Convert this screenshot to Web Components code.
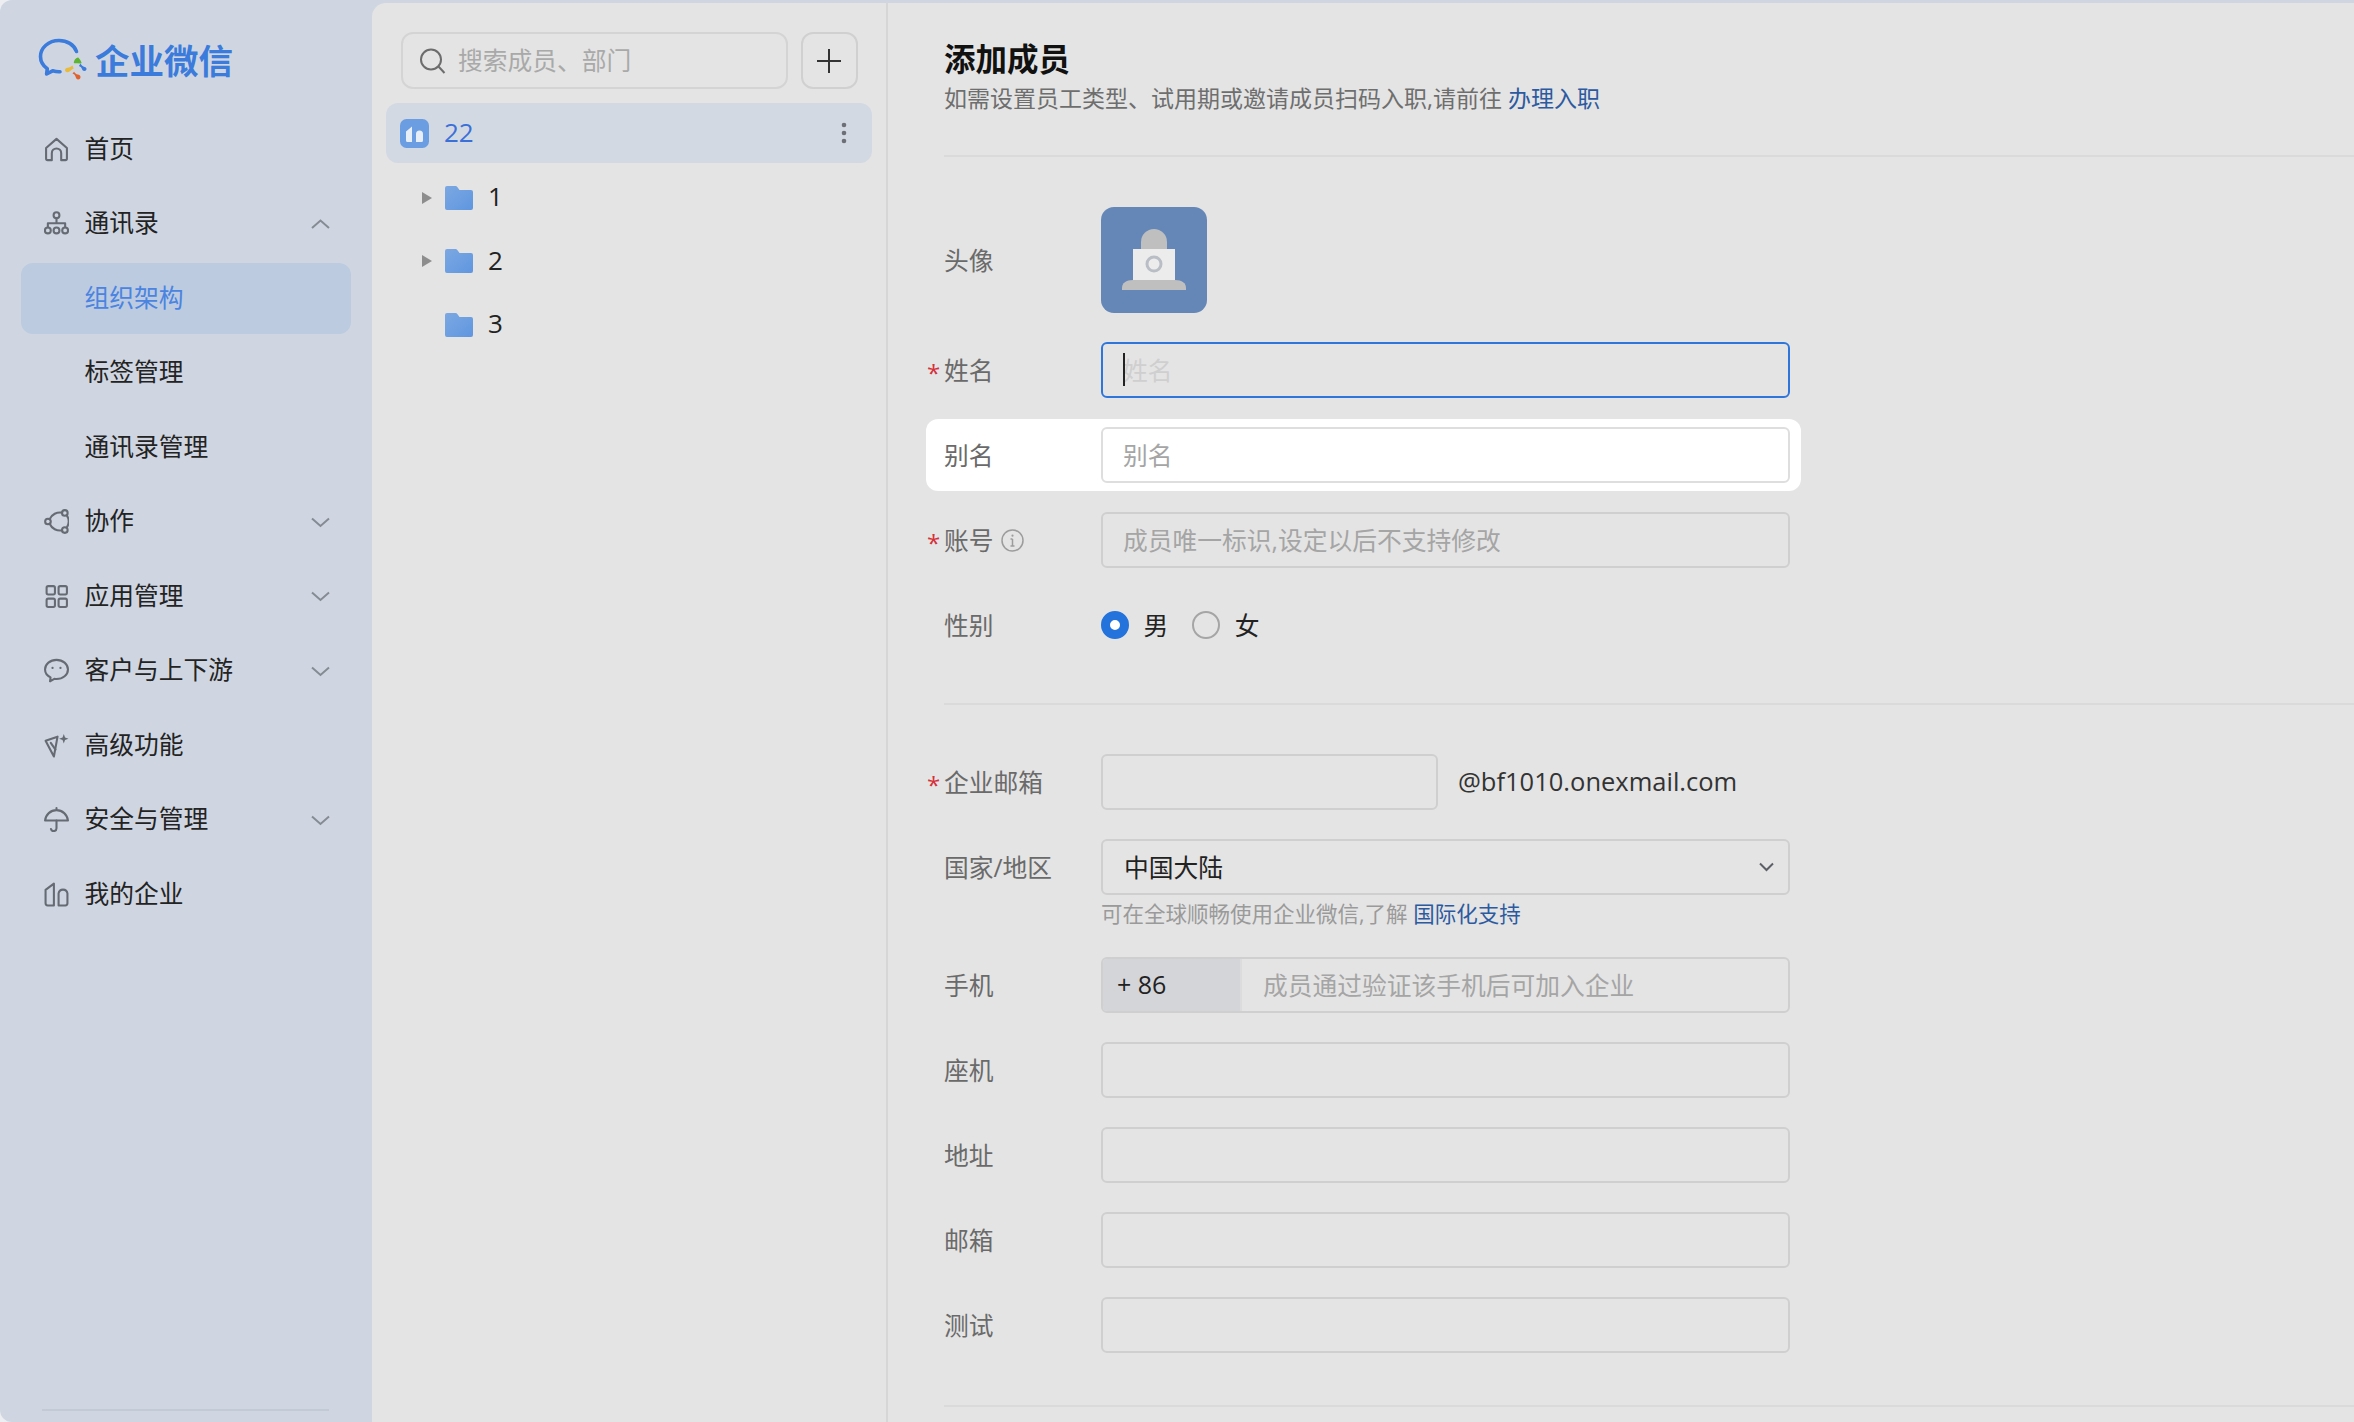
<!DOCTYPE html>
<html lang="zh-CN">
<head>
<meta charset="utf-8">
<title>添加成员</title>
<style>
  html, body { margin: 0; height: 100%; overflow: hidden; background: #eceef2; }
  body { font-family: "Open Sans", "Noto Sans CJK SC", sans-serif; }
</style>
</head>
<body>
<wx-app>
  <wx-sidebar slot="sidebar">
    <wx-nav icon="home">首页</wx-nav>
    <wx-nav icon="org" chevron="up">通讯录</wx-nav>
    <wx-nav active>组织架构</wx-nav>
    <wx-nav>标签管理</wx-nav>
    <wx-nav>通讯录管理</wx-nav>
    <wx-nav icon="collab" chevron="down">协作</wx-nav>
    <wx-nav icon="apps" chevron="down">应用管理</wx-nav>
    <wx-nav icon="chat" chevron="down">客户与上下游</wx-nav>
    <wx-nav icon="wand">高级功能</wx-nav>
    <wx-nav icon="umbrella" chevron="down">安全与管理</wx-nav>
    <wx-nav icon="corp">我的企业</wx-nav>
  </wx-sidebar>

  <wx-tree slot="tree">
    <wx-tree-row arrow>1</wx-tree-row>
    <wx-tree-row arrow>2</wx-tree-row>
    <wx-tree-row>3</wx-tree-row>
  </wx-tree>

  <wx-member-form slot="form"></wx-member-form>
</wx-app>

<script>
const ICONS = {
  home: '<path d="M2 10.500 12 1.800l10 8.700v10.200a1.500 1.500 0 0 1-1.500 1.500H16.500v-6.700a4.500 4.500 0 0 0-9 0v6.700H3.500A1.500 1.500 0 0 1 2 20.700z"/>',
  org: '<circle cx="12" cy="4" r="2.800"/><path d="M12 6.800v5M3.700 15.500v-3.700h16.600v3.700"/><circle cx="3.700" cy="18.700" r="2.800"/><circle cx="12" cy="18.700" r="2.800"/><circle cx="20.300" cy="18.700" r="2.800"/>',
  collab: '<circle cx="20" cy="3.800" r="2.700"/><circle cx="3.800" cy="12" r="2.700"/><circle cx="20" cy="20.200" r="2.700"/><path d="M17.400 3.500A11 11 0 0 0 5.400 9.800M5.400 14.200a11 11 0 0 0 12 6.300M21.800 6a11 11 0 0 1 0 12"/>',
  apps: '<rect x="2.500" y="2" width="8" height="8" rx="1.500"/><rect x="14" y="2" width="8" height="8" rx="1.500"/><rect x="2.500" y="14" width="8" height="8" rx="1.500"/><rect x="14" y="14" width="8" height="8" rx="1.500"/>',
  chat: '<path d="M12 1.800C5.900 1.800 1 5.800 1 11c0 3.300 2.100 6 5.300 7.600l-.5 3.800 4.100-2.400c.7.100 1.400.200 2.100.200 6.100 0 11-4 11-9.200S18.100 1.800 12 1.800z"/><circle cx="8.200" cy="9.500" r="1.100" fill="currentColor" stroke="none"/><circle cx="15.800" cy="9.500" r="1.100" fill="currentColor" stroke="none"/>',
  wand: '<path d="M1.500 7.500 13 3.500l-3.500 19z"/><path d="M6.500 9.500l4.500 6.500"/><path d="M19 1l1.200 3.300L23.500 5.500l-3.300 1.200L19 10l-1.200-3.300L14.500 5.500l3.300-1.200z" fill="currentColor" stroke="none"/>',
  umbrella: '<path d="M12 1v2M1 13C1.600 7.300 6.300 3 12 3s10.400 4.300 11 10z"/><path d="M12 13v7.500a2.700 2.700 0 0 1-5.300 .7"/>',
  corp: '<path d="M1.500 7.500 9.500 1.500V22.500H3.500a2 2 0 0 1-2-2zM14 11a4.300 4.300 0 0 1 8.500 0v9.500a2 2 0 0 1-2 2H14z"/>'
}

class WxApp extends HTMLElement {
  constructor () {
    super()
    this.shadow = this.attachShadow({ mode: 'open' })
  }
  connectedCallback () {
    this.shadow.innerHTML = /*html*/`
      <style>
        :host { display: grid; grid-template-columns: 372px 1fr; height: 100vh; }
        .wrap { display: flex; flex-direction: column; background: #cfd6e1; padding-top: 3px; min-width: 0; box-sizing: border-box; }
        .main {
          display: grid;
          grid-template-columns: 516px 1fr;
          flex: 1;
          background: #e4e4e4;
          border-top-left-radius: 14px;
          min-width: 0;
          overflow: hidden;
        }
      </style>
      <slot name="sidebar"></slot>
      <div class="wrap">
        <div class="main">
          <slot name="tree"></slot>
          <slot name="form"></slot>
        </div>
      </div>
    `
  }
}

class WxSidebar extends HTMLElement {
  constructor () {
    super()
    this.shadow = this.attachShadow({ mode: 'open' })
  }
  connectedCallback () {
    this.shadow.innerHTML = /*html*/`
      <style>
        :host {
          display: flex;
          flex-direction: column;
          background: #cfd6e1;
          border-radius: 12px 0 0 12px;
          height: 100%;
          box-sizing: border-box;
        }
        .logo { display: flex; align-items: center; height: 112px; padding: 8px 0 0 38px; gap: 7px; box-sizing: border-box; }
        .logo span { font-size: 34.500px; font-weight: 700; color: #3a7bdc; font-family: "Noto Sans CJK SC", sans-serif; padding-bottom: 3px; }
        nav { flex: 1; }
        .foot { height: 2px; background: #c2cad6; margin: 0 43px 11px 42px; }
      </style>
      <div class="logo">
        <svg width="50" height="44" viewBox="0 0 50 44" fill="none">
          <path d="M38.500 13.500C36 6.500 29 2.500 21 2.500 10.500 2.500 2.500 9.800 2.500 18.500c0 5 2.600 9.300 6.800 12.200l-.7 5.300 6-3.200c2.400.7 5 1 7.400 .9" stroke="#3a7bdc" stroke-width="3.600" stroke-linecap="round" stroke-linejoin="round"/>
          <path d="M36.500 24.500c.4-2.400 1.600-3.700 3.500-4.300 1.200 1.300 2.200 2.600 2.800 4.500-2.200-.4-4.200-.4-6.300-.2z" fill="#5cb531" stroke="#5cb531" stroke-width="1.500" stroke-linejoin="round"/>
          <path d="M42.500 25.500c1 1.700 2.300 3 4.300 3.600 1 .3 1.700 1 1.700 1.800 0 1-.9 2-2.300 2-1 0-1.800-.8-2.100-1.700-.6-1.900-2-2.800-3.200-3.300z" fill="#3a7bdc"/>
          <path d="M34.500 27.500c-1.400 1-3 2.300-5 2.300-1.400 0-2.500 1-2.500 2.200 0 1.500 1.300 2.500 2.800 2.200 1.900-.4 3.300-2.300 5.900-3.700z" fill="#e9bb3c"/>
          <path d="M34.500 35.500c1.400.6 2.500 1.400 3 3 .4 1.500 1 3 2.700 3 1.500 0 2.300-1.100 2.300-2.400 0-1.400-1.100-2.500-2.800-2.600-1.500-.1-2.800-1.400-3.600-2.700z" fill="#e2622d"/>
        </svg>
        <span>企业微信</span>
      </div>
      <nav><slot></slot></nav>
      <div class="foot"></div>
    `
  }
}

class WxNav extends HTMLElement {
  constructor () {
    super()
    this.shadow = this.attachShadow({ mode: 'open' })
  }
  connectedCallback () {
    const icon = ICONS[this.getAttribute('icon')]
    const chevron = this.getAttribute('chevron')
    const points = chevron === 'up' ? '1,9 9.500,1.500 18,9' : '1,1.500 9.500,9 18,1.500'
    this.shadow.innerHTML = /*html*/`
      <style>
        :host { display: block; height: 74.500px; padding: 1.750px 21px; box-sizing: border-box; }
        .row {
          display: flex;
          align-items: center;
          height: 100%;
          border-radius: 12px;
          padding-left: 23px;
          font-size: 24.750px;
          color: #232323;
          position: relative;
        }
        :host([active]) .row { background: #bccbe0; color: #4a84e0; }
        .icon { width: 25px; height: 25px; margin-right: 15.500px; flex: none; color: #666b73; }
        .blank { width: 25px; margin-right: 15.500px; flex: none; }
        .label { padding-bottom: 5px; }
        .chev { position: absolute; right: 21px; top: 50%; margin-top: -5px; }
      </style>
      <div class="row">
        ${icon
          ? `<svg class="icon" viewBox="0 0 24 24" fill="none" stroke="currentColor" stroke-width="2" stroke-linejoin="round" stroke-linecap="round">${icon}</svg>`
          : '<span class="blank"></span>'}
        <span class="label"><slot></slot></span>
        ${chevron
          ? `<svg class="chev" width="19" height="11" viewBox="0 0 19 11" fill="none"><polyline points="${points}" stroke="#868b93" stroke-width="2"/></svg>`
          : ''}
      </div>
    `
  }
}

class WxTree extends HTMLElement {
  constructor () {
    super()
    this.shadow = this.attachShadow({ mode: 'open' })
  }
  connectedCallback () {
    this.shadow.innerHTML = /*html*/`
      <style>
        :host { display: block; border-right: 2px solid #d6d6d6; height: 100%; box-sizing: border-box; }
        .top { display: flex; gap: 13px; padding: 29px 0 0 29px; }
        .search {
          display: flex;
          align-items: center;
          width: 387px;
          height: 57px;
          box-sizing: border-box;
          border: 2px solid #d4d4d4;
          border-radius: 12px;
          padding-left: 16px;
          gap: 13px;
          font-size: 24.750px;
          color: #a9a9a9;
        }
        .search span { padding-bottom: 4px; margin-left: -1px; }
        .add {
          display: flex;
          align-items: center;
          justify-content: center;
          width: 57px;
          height: 57px;
          box-sizing: border-box;
          border: 2px solid #d0d0d0;
          border-radius: 12px;
          padding-right: 2px;
        }
        .root {
          display: flex;
          align-items: center;
          height: 60px;
          margin: 14px 14px 3px 14px;
          padding: 0 25px 0 14px;
          border-radius: 12px;
          background: #d2d9e3;
          color: #3a70d8;
          font-size: 26px;
          gap: 15px;
        }
        .root span { flex: 1; padding-bottom: 3px; }
      </style>
      <div class="top">
        <div class="search">
          <svg width="27" height="26" viewBox="0 0 27 26" fill="none" stroke="#6d6d6d" stroke-width="2"><circle cx="12" cy="11.500" r="10"/><path d="M19.500 18.500l6 6.500"/></svg>
          <span>搜索成员、部门</span>
        </div>
        <div class="add">
          <svg width="24" height="24" viewBox="0 0 24 24" stroke="#333" stroke-width="2"><path d="M12 0v24M0 12h24"/></svg>
        </div>
      </div>
      <div class="root">
        <svg width="29" height="29" viewBox="0 0 29 29"><rect width="29" height="29" rx="6.500" fill="#6a9de2"/><path d="M6 12.500 12 7.500V23H7.500A1.500 1.500 0 0 1 6 21.500zM16 15a3.200 3.200 0 0 1 7 0v6.500a1.500 1.500 0 0 1-1.500 1.500H16z" fill="#e8eef8"/></svg>
        <span>22</span>
        <svg width="6" height="22" viewBox="0 0 6 22" fill="#6c6f75"><circle cx="3" cy="3" r="2.300"/><circle cx="3" cy="11" r="2.300"/><circle cx="3" cy="19" r="2.300"/></svg>
      </div>
      <slot></slot>
    `
  }
}

class WxTreeRow extends HTMLElement {
  constructor () {
    super()
    this.shadow = this.attachShadow({ mode: 'open' })
  }
  connectedCallback () {
    this.shadow.innerHTML = /*html*/`
      <style>
        :host { display: flex; align-items: center; height: 63.500px; padding-left: 50px; font-size: 26px; color: #222; }
        .arrow { width: 23px; flex: none; display: flex; }
        .folder { margin-right: 15px; flex: none; }
        .label { padding-bottom: 3px; }
      </style>
      <span class="arrow">
        ${this.hasAttribute('arrow') ? '<svg width="10" height="12" viewBox="0 0 10 12"><path d="M0 0l10 6-10 6z" fill="#8d8d8d"/></svg>' : ''}
      </span>
      <svg class="folder" width="28" height="24" viewBox="0 0 28 24"><defs><linearGradient id="f" x1="0" y1="0" x2="1" y2="1"><stop offset="0" stop-color="#7ca8e2"/><stop offset="1" stop-color="#5f96e0"/></linearGradient></defs><path d="M2 0h8.500c.8 0 1.300.3 1.800 .9L14.500 4H26a2 2 0 0 1 2 2v16a2 2 0 0 1-2 2H2a2 2 0 0 1-2-2V2a2 2 0 0 1 2-2z" fill="url(#f)"/></svg>
      <span class="label"><slot></slot></span>
    `
  }
}

class WxRow extends HTMLElement {
  constructor () {
    super()
    this.shadow = this.attachShadow({ mode: 'open' })
  }
  connectedCallback () {
    const required = this.hasAttribute('required')
    const info = this.hasAttribute('info')
    this.shadow.innerHTML = /*html*/`
      <style>
        :host { display: flex; align-items: center; min-height: 56px; margin-bottom: 29px; position: relative; }
        :host([highlight]) {
          background: #fff;
          border-radius: 12px;
          margin: -8px 0 21px -18px;
          padding: 8px 11px 8px 18px;
          width: 846px;
          box-sizing: content-box;
        }
        label { display: flex; align-items: center; width: 157px; flex: none; font-size: 24.750px; color: #6a6a6a; white-space: nowrap; }
        label span { padding-bottom: 3px; }
        .req { position: absolute; left: -17px; top: 50%; margin-top: -11px; color: #d6303a; font-size: 24px; line-height: 28px; }
        .info { margin-left: 7px; }
        .body { display: flex; align-items: center; width: 689px; }
      </style>
      ${required ? '<span class="req">*</span>' : ''}
      <label>
        <span>${this.getAttribute('label')}</span>
        ${info ? '<svg class="info" width="23" height="23" viewBox="0 0 23 23" fill="none" stroke="#9c9c9c"><circle cx="11.500" cy="11.500" r="10.500" stroke-width="1.500"/><path d="M11.500 10v7M9.500 10h2M9.500 17h4" stroke-width="1.500"/><circle cx="11.500" cy="6.700" r="1.100" fill="#9c9c9c" stroke="none"/></svg>' : ''}
      </label>
      <div class="body"><slot></slot></div>
    `
  }
}

class WxField extends HTMLElement {
  constructor () {
    super()
    this.shadow = this.attachShadow({ mode: 'open' })
  }
  connectedCallback () {
    const prefix = this.getAttribute('prefix')
    const placeholder = this.getAttribute('placeholder') || ''
    const focus = this.hasAttribute('focus')
    this.shadow.innerHTML = /*html*/`
      <style>
        :host {
          display: flex;
          align-items: center;
          flex: 1;
          height: 56px;
          box-sizing: border-box;
          border: 2px solid #cfcfcf;
          border-radius: 6px;
          font-size: 24.750px;
          color: #a5a5a5;
          overflow: hidden;
        }
        :host([focus]) { border-color: #2f76dc; color: #cfcfcf; }
        :host([light]) { background: #fff; border-color: #dedede; }
        .prefix {
          width: 139px;
          flex: none;
          align-self: stretch;
          display: flex;
          align-items: center;
          padding: 0 0 3px 14px;
          box-sizing: border-box;
          background: #d3d5d9;
          border-right: 2px solid #dcdcdc;
          color: #222;
          font-size: 25px;
        }
        .text { padding: 0 0 3px ${prefix ? '21px' : '20px'}; position: relative; white-space: nowrap; }
        .caret { position: absolute; left: 20px; top: 2px; bottom: 4px; width: 2px; background: #222; }
      </style>
      ${prefix ? `<span class="prefix">${prefix}</span>` : ''}
      <span class="text">${focus ? '<i class="caret"></i>' : ''}${placeholder}</span>
    `
  }
}

class WxSelect extends HTMLElement {
  constructor () {
    super()
    this.shadow = this.attachShadow({ mode: 'open' })
  }
  connectedCallback () {
    this.shadow.innerHTML = /*html*/`
      <style>
        :host {
          display: flex;
          align-items: center;
          justify-content: space-between;
          flex: 1;
          height: 56px;
          box-sizing: border-box;
          border: 2px solid #cfcfcf;
          border-radius: 6px;
          padding: 0 14px 0 21px;
          font-size: 24.750px;
          color: #222;
        }
        span { padding-bottom: 3px; }
      </style>
      <span><slot></slot></span>
      <svg width="15" height="10" viewBox="0 0 15 10" fill="none"><path d="M1 1.500 7.500 8 14 1.500" stroke="#5c5f65" stroke-width="2"/></svg>
    `
  }
}

class WxRadio extends HTMLElement {
  constructor () {
    super()
    this.shadow = this.attachShadow({ mode: 'open' })
  }
  connectedCallback () {
    this.shadow.innerHTML = /*html*/`
      <style>
        :host { display: inline-flex; align-items: center; gap: 14.500px; font-size: 24.750px; color: #222; margin-right: 24px; }
        .dot { width: 28px; height: 28px; box-sizing: border-box; border-radius: 50%; border: 2px solid #a5a5a5; }
        :host([checked]) .dot { border: 9px solid #2472dc; background: #fff; }
        span.t { padding-bottom: 3px; }
      </style>
      <span class="dot"></span>
      <span class="t"><slot></slot></span>
    `
  }
}

class WxMemberForm extends HTMLElement {
  constructor () {
    super()
    this.shadow = this.attachShadow({ mode: 'open' })
  }
  connectedCallback () {
    this.shadow.innerHTML = /*html*/`
      <style>
        :host { display: block; padding-left: 56px; min-width: 0; }
        h2 { margin: 0; padding-top: 34px; font-size: 31.500px; line-height: 40px; font-weight: 700; color: #111; font-family: "Noto Sans CJK SC", sans-serif; }
        p { margin: 6px 0 0; font-size: 23px; line-height: 30px; color: #6e6e6e; white-space: nowrap; }
        a { color: #2c5aa0; text-decoration: none; }
        hr { border: 0; height: 2px; background: #dadada; margin: 0; }
        .head-line { margin-top: 42px; margin-bottom: 50px; }
        .mid-line { margin-top: 50px; margin-bottom: 49px; }
        .end-line { margin-top: 52px; }
        .avatar {
          display: flex;
          align-items: center;
          justify-content: center;
          width: 106px;
          height: 106px;
          border-radius: 13px;
          background: #6487b8;
        }
        .mail { flex: none; width: 337px; }
        .domain { margin-left: 20px; font-size: 25.500px; color: #333; white-space: nowrap; padding-bottom: 2px; }
        .hint { margin: -25px 0 0 157px; height: 29px; line-height: 29px; font-size: 21.500px; color: #9a9a9a; white-space: nowrap; padding-bottom: 29px; }
      </style>
      <h2>添加成员</h2>
      <p>如需设置员工类型、试用期或邀请成员扫码入职,请前往 <a>办理入职</a></p>
      <hr class="head-line">

      <wx-row label="头像">
        <div class="avatar">
          <svg width="64" height="64" viewBox="0 0 64 64">
            <path d="M19 22V14a13 13 0 0 1 26 0v8z" fill="#bfbfbf"/>
            <rect x="11" y="21" width="42" height="31" fill="#ececec"/>
            <circle cx="32" cy="36" r="7" fill="none" stroke="#b9bec6" stroke-width="3"/>
            <path d="M0 60c0-5 4-8 11-8h42c7 0 11 3 11 8v2H0z" fill="#bfbfbf"/>
          </svg>
        </div>
      </wx-row>
      <wx-row label="姓名" required><wx-field focus placeholder="姓名"></wx-field></wx-row>
      <wx-row label="别名" highlight><wx-field light placeholder="别名"></wx-field></wx-row>
      <wx-row label="账号" required info><wx-field placeholder="成员唯一标识,设定以后不支持修改"></wx-field></wx-row>
      <wx-row label="性别">
        <wx-radio checked>男</wx-radio>
        <wx-radio>女</wx-radio>
      </wx-row>
      <hr class="mid-line">

      <wx-row label="企业邮箱" required>
        <wx-field class="mail"></wx-field>
        <span class="domain">@bf1010.onexmail.com</span>
      </wx-row>
      <wx-row label="国家/地区"><wx-select>中国大陆</wx-select></wx-row>
      <div class="hint">可在全球顺畅使用企业微信,了解 <a>国际化支持</a></div>
      <wx-row label="手机"><wx-field prefix="+ 86" placeholder="成员通过验证该手机后可加入企业"></wx-field></wx-row>
      <wx-row label="座机"><wx-field></wx-field></wx-row>
      <wx-row label="地址"><wx-field></wx-field></wx-row>
      <wx-row label="邮箱"><wx-field></wx-field></wx-row>
      <wx-row label="测试"><wx-field></wx-field></wx-row>
      <hr class="end-line">
    `
  }
}

customElements.define('wx-app', WxApp)
customElements.define('wx-sidebar', WxSidebar)
customElements.define('wx-nav', WxNav)
customElements.define('wx-tree', WxTree)
customElements.define('wx-tree-row', WxTreeRow)
customElements.define('wx-row', WxRow)
customElements.define('wx-field', WxField)
customElements.define('wx-select', WxSelect)
customElements.define('wx-radio', WxRadio)
customElements.define('wx-member-form', WxMemberForm)
</script>
</body>
</html>
